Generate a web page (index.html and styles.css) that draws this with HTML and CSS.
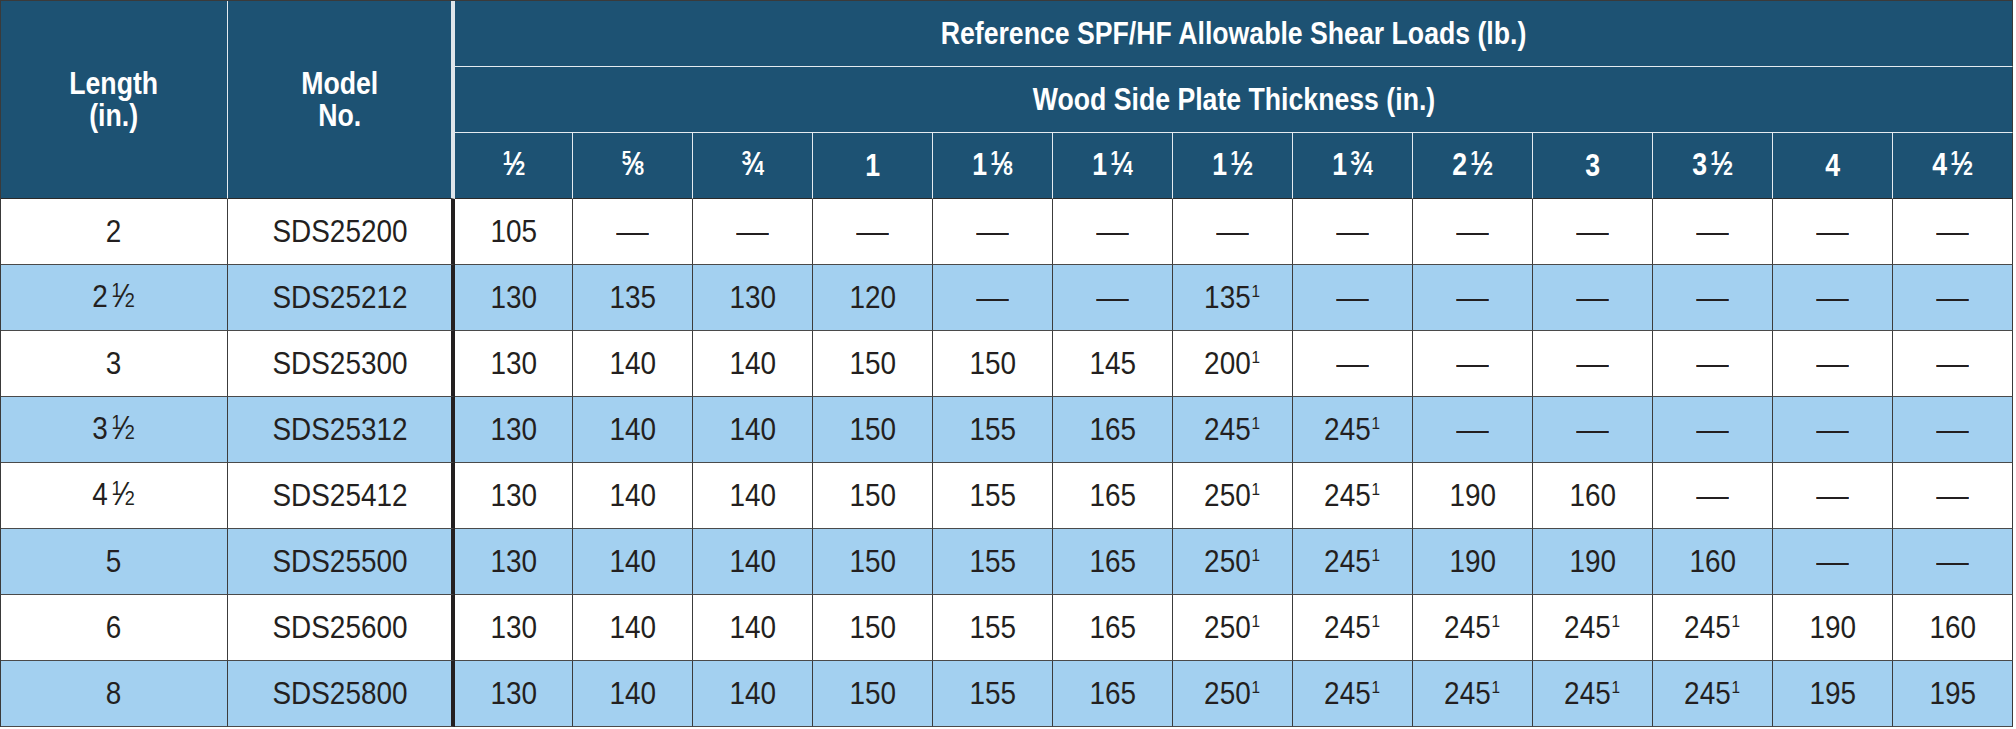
FILE: index.html
```html
<!DOCTYPE html>
<html lang="en">
<head>
<meta charset="utf-8">
<title>SDS Allowable Shear Loads</title>
<link rel="stylesheet" href="styles.css">
</head>
<body>
<div class="tbl">
  <div class="row head">
    <div class="c h tall"><span class="t">Length<br>(in.)</span></div>
    <div class="c h tall sep"><span class="t">Model<br>No.</span></div>
    <div class="c h wide"><span class="t">Reference SPF/HF Allowable Shear Loads (lb.)</span></div>
    <div class="c h wide"><span class="t">Wood Side Plate Thickness (in.)</span></div>
  </div>
  <div class="row head sub">
    <div class="c h"><span class="t"><span class="fx"><span class="nu">1</span><span class="sl">⁄</span><span class="de">2</span></span></span></div>
    <div class="c h"><span class="t"><span class="fx"><span class="nu">5</span><span class="sl">⁄</span><span class="de">8</span></span></span></div>
    <div class="c h"><span class="t"><span class="fx"><span class="nu">3</span><span class="sl">⁄</span><span class="de">4</span></span></span></div>
    <div class="c h"><span class="t">1</span></div>
    <div class="c h"><span class="t">1<span class="fx w"><span class="nu">1</span><span class="sl">⁄</span><span class="de">8</span></span></span></div>
    <div class="c h"><span class="t">1<span class="fx w"><span class="nu">1</span><span class="sl">⁄</span><span class="de">4</span></span></span></div>
    <div class="c h"><span class="t">1<span class="fx w"><span class="nu">1</span><span class="sl">⁄</span><span class="de">2</span></span></span></div>
    <div class="c h"><span class="t">1<span class="fx w"><span class="nu">3</span><span class="sl">⁄</span><span class="de">4</span></span></span></div>
    <div class="c h"><span class="t">2<span class="fx w"><span class="nu">1</span><span class="sl">⁄</span><span class="de">2</span></span></span></div>
    <div class="c h"><span class="t">3</span></div>
    <div class="c h"><span class="t">3<span class="fx w"><span class="nu">1</span><span class="sl">⁄</span><span class="de">2</span></span></span></div>
    <div class="c h"><span class="t">4</span></div>
    <div class="c h last"><span class="t">4<span class="fx w"><span class="nu">1</span><span class="sl">⁄</span><span class="de">2</span></span></span></div>
  </div>

  <div class="row">
    <div class="c"><span class="t">2</span></div>
    <div class="c sep"><span class="t">SDS25200</span></div>
    <div class="c"><span class="t">105</span></div>
    <div class="c"><span class="t d">—</span></div>
    <div class="c"><span class="t d">—</span></div>
    <div class="c"><span class="t d">—</span></div>
    <div class="c"><span class="t d">—</span></div>
    <div class="c"><span class="t d">—</span></div>
    <div class="c"><span class="t d">—</span></div>
    <div class="c"><span class="t d">—</span></div>
    <div class="c"><span class="t d">—</span></div>
    <div class="c"><span class="t d">—</span></div>
    <div class="c"><span class="t d">—</span></div>
    <div class="c"><span class="t d">—</span></div>
    <div class="c last"><span class="t d">—</span></div>
  </div>

  <div class="row alt">
    <div class="c"><span class="t">2<span class="fx w"><span class="nu">1</span><span class="sl">⁄</span><span class="de">2</span></span></span></div>
    <div class="c sep"><span class="t">SDS25212</span></div>
    <div class="c"><span class="t">130</span></div>
    <div class="c"><span class="t">135</span></div>
    <div class="c"><span class="t">130</span></div>
    <div class="c"><span class="t">120</span></div>
    <div class="c"><span class="t d">—</span></div>
    <div class="c"><span class="t d">—</span></div>
    <div class="c"><span class="t">135<sup class="n">1</sup></span></div>
    <div class="c"><span class="t d">—</span></div>
    <div class="c"><span class="t d">—</span></div>
    <div class="c"><span class="t d">—</span></div>
    <div class="c"><span class="t d">—</span></div>
    <div class="c"><span class="t d">—</span></div>
    <div class="c last"><span class="t d">—</span></div>
  </div>

  <div class="row">
    <div class="c"><span class="t">3</span></div>
    <div class="c sep"><span class="t">SDS25300</span></div>
    <div class="c"><span class="t">130</span></div>
    <div class="c"><span class="t">140</span></div>
    <div class="c"><span class="t">140</span></div>
    <div class="c"><span class="t">150</span></div>
    <div class="c"><span class="t">150</span></div>
    <div class="c"><span class="t">145</span></div>
    <div class="c"><span class="t">200<sup class="n">1</sup></span></div>
    <div class="c"><span class="t d">—</span></div>
    <div class="c"><span class="t d">—</span></div>
    <div class="c"><span class="t d">—</span></div>
    <div class="c"><span class="t d">—</span></div>
    <div class="c"><span class="t d">—</span></div>
    <div class="c last"><span class="t d">—</span></div>
  </div>

  <div class="row alt">
    <div class="c"><span class="t">3<span class="fx w"><span class="nu">1</span><span class="sl">⁄</span><span class="de">2</span></span></span></div>
    <div class="c sep"><span class="t">SDS25312</span></div>
    <div class="c"><span class="t">130</span></div>
    <div class="c"><span class="t">140</span></div>
    <div class="c"><span class="t">140</span></div>
    <div class="c"><span class="t">150</span></div>
    <div class="c"><span class="t">155</span></div>
    <div class="c"><span class="t">165</span></div>
    <div class="c"><span class="t">245<sup class="n">1</sup></span></div>
    <div class="c"><span class="t">245<sup class="n">1</sup></span></div>
    <div class="c"><span class="t d">—</span></div>
    <div class="c"><span class="t d">—</span></div>
    <div class="c"><span class="t d">—</span></div>
    <div class="c"><span class="t d">—</span></div>
    <div class="c last"><span class="t d">—</span></div>
  </div>

  <div class="row">
    <div class="c"><span class="t">4<span class="fx w"><span class="nu">1</span><span class="sl">⁄</span><span class="de">2</span></span></span></div>
    <div class="c sep"><span class="t">SDS25412</span></div>
    <div class="c"><span class="t">130</span></div>
    <div class="c"><span class="t">140</span></div>
    <div class="c"><span class="t">140</span></div>
    <div class="c"><span class="t">150</span></div>
    <div class="c"><span class="t">155</span></div>
    <div class="c"><span class="t">165</span></div>
    <div class="c"><span class="t">250<sup class="n">1</sup></span></div>
    <div class="c"><span class="t">245<sup class="n">1</sup></span></div>
    <div class="c"><span class="t">190</span></div>
    <div class="c"><span class="t">160</span></div>
    <div class="c"><span class="t d">—</span></div>
    <div class="c"><span class="t d">—</span></div>
    <div class="c last"><span class="t d">—</span></div>
  </div>

  <div class="row alt">
    <div class="c"><span class="t">5</span></div>
    <div class="c sep"><span class="t">SDS25500</span></div>
    <div class="c"><span class="t">130</span></div>
    <div class="c"><span class="t">140</span></div>
    <div class="c"><span class="t">140</span></div>
    <div class="c"><span class="t">150</span></div>
    <div class="c"><span class="t">155</span></div>
    <div class="c"><span class="t">165</span></div>
    <div class="c"><span class="t">250<sup class="n">1</sup></span></div>
    <div class="c"><span class="t">245<sup class="n">1</sup></span></div>
    <div class="c"><span class="t">190</span></div>
    <div class="c"><span class="t">190</span></div>
    <div class="c"><span class="t">160</span></div>
    <div class="c"><span class="t d">—</span></div>
    <div class="c last"><span class="t d">—</span></div>
  </div>

  <div class="row">
    <div class="c"><span class="t">6</span></div>
    <div class="c sep"><span class="t">SDS25600</span></div>
    <div class="c"><span class="t">130</span></div>
    <div class="c"><span class="t">140</span></div>
    <div class="c"><span class="t">140</span></div>
    <div class="c"><span class="t">150</span></div>
    <div class="c"><span class="t">155</span></div>
    <div class="c"><span class="t">165</span></div>
    <div class="c"><span class="t">250<sup class="n">1</sup></span></div>
    <div class="c"><span class="t">245<sup class="n">1</sup></span></div>
    <div class="c"><span class="t">245<sup class="n">1</sup></span></div>
    <div class="c"><span class="t">245<sup class="n">1</sup></span></div>
    <div class="c"><span class="t">245<sup class="n">1</sup></span></div>
    <div class="c"><span class="t">190</span></div>
    <div class="c last"><span class="t">160</span></div>
  </div>

  <div class="row alt">
    <div class="c"><span class="t">8</span></div>
    <div class="c sep"><span class="t">SDS25800</span></div>
    <div class="c"><span class="t">130</span></div>
    <div class="c"><span class="t">140</span></div>
    <div class="c"><span class="t">140</span></div>
    <div class="c"><span class="t">150</span></div>
    <div class="c"><span class="t">155</span></div>
    <div class="c"><span class="t">165</span></div>
    <div class="c"><span class="t">250<sup class="n">1</sup></span></div>
    <div class="c"><span class="t">245<sup class="n">1</sup></span></div>
    <div class="c"><span class="t">245<sup class="n">1</sup></span></div>
    <div class="c"><span class="t">245<sup class="n">1</sup></span></div>
    <div class="c"><span class="t">245<sup class="n">1</sup></span></div>
    <div class="c"><span class="t">195</span></div>
    <div class="c last"><span class="t">195</span></div>
  </div>
</div>
</body>
</html>
```
FILE: styles.css
```css
html, body {
  margin: 0;
  padding: 0;
  background: #ffffff;
}

.tbl {
  display: grid;
  grid-template-columns: 227px 227px 118px repeat(12, 120px);
  grid-auto-rows: 66px;
  width: 2012px;
  border-top: 1px solid #3a3a3a;
  border-left: 1px solid #3a3a3a;
  font-family: "Liberation Sans", Arial, sans-serif;
  color: #231f20;
}

.row {
  display: contents;
}

.c {
  box-sizing: border-box;
  display: flex;
  align-items: center;
  justify-content: center;
  text-align: center;
  border-right: 1px solid #3c3c3c;
  border-bottom: 1px solid #4a4a4a;
  font-size: 31px;
  line-height: 32px;
  background: #ffffff;
  white-space: nowrap;
}

.c.sep {
  border-right: 4px solid #231f20;
}

.alt > .c {
  background: #a3d0f0;
}

.t {
  display: inline-block;
  transform: scaleX(0.9);
  transform-origin: center;
}

.t.d {
  transform: scaleX(1.05);
}

/* built fractions */
.fx {
  white-space: nowrap;
}

.fx.w {
  margin-left: 4px;
}

.fx .nu {
  font-size: 20px;
  vertical-align: 10px;
  line-height: 0;
}

.fx .sl {
  font-size: 33px;
  margin: 0 -1px;
}

.fx .de {
  font-size: 20px;
}

.n {
  font-size: 17px;
  line-height: 0;
  vertical-align: 11px;
  margin-left: 1px;
}

/* header */
.h {
  background: #1d5273;
  color: #ffffff;
  font-weight: bold;
  font-size: 31px;
  border-right: 1px solid #e4ebf0;
  border-bottom: 1px solid #e4ebf0;
}

.h .t {
  transform: scaleX(0.86);
}

.h.tall {
  grid-row: span 3;
  border-bottom: 1px solid #2a2a2a;
}

.h.tall.sep {
  border-right: 4px solid #dfe6eb;
}

.h.wide {
  grid-column: span 13;
  border-right: 1px solid #3a3a3a;
}

.sub > .h {
  border-bottom: 1px solid #2a2a2a;
}

.c.last {
  border-right: 1px solid #3a3a3a;
}
```
